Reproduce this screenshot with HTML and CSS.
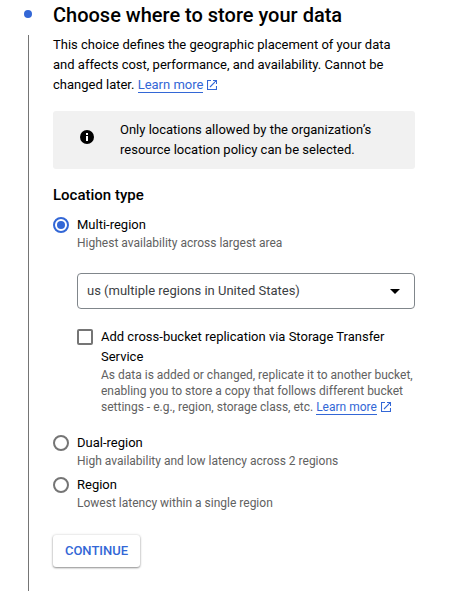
FILE: index.html
```
<!DOCTYPE html>
<html lang="en">
<head>
<meta charset="utf-8">
<title>Choose where to store your data</title>
<link rel="stylesheet" href="styles.css">
</head>
<body>
<main class="step">
  <div class="rail"><span class="dot"></span><span class="line"></span></div>
  <section class="content">
    <h2 class="title">Choose where to store your data</h2>
    <p class="intro">This choice defines the geographic placement of your data<br>and affects cost, performance, and availability. Cannot be<br>changed later. <a class="link">Learn more</a><svg class="ext" viewBox="0 0 10 10"><path d="M4 .5H.5v9h9V6M6 .5h3.5V4M9.3.7 3 7"/></svg></p>
    <div class="banner">
      <svg class="info" viewBox="0 0 14 14"><circle cx="7" cy="7" r="7"/><path d="M6 3h2v2H6zM6 6h2v5H6z"/></svg>
      <p class="banner-text">Only locations allowed by the organization’s<br>resource location policy can be selected.</p>
    </div>
    <h3 class="subtitle">Location type</h3>
    <div class="option">
      <span class="radio checked"></span>
      <div class="option-body">
        <div class="label">Multi-region</div>
        <div class="hint">Highest availability across largest area</div>
      </div>
    </div>
    <div class="nested">
      <div class="select"><span>us (multiple regions in United States)</span><svg class="arrow" viewBox="0 0 10 5"><path d="M0 0h10L5 5z"/></svg></div>
      <div class="check-row">
        <span class="checkbox"></span>
        <div class="check-body">
          <div class="label">Add cross-bucket replication via Storage Transfer<br>Service</div>
          <div class="hint">As data is added or changed, replicate it to another bucket,<br>enabling you to store a copy that follows different bucket<br>settings - e.g., region, storage class, etc. <a class="link">Learn more</a><svg class="ext" viewBox="0 0 10 10"><path d="M4 .5H.5v9h9V6M6 .5h3.5V4M9.3.7 3 7"/></svg></div>
        </div>
      </div>
    </div>
    <div class="option">
      <span class="radio"></span>
      <div class="option-body">
        <div class="label">Dual-region</div>
        <div class="hint">High availability and low latency across 2 regions</div>
      </div>
    </div>
    <div class="option">
      <span class="radio"></span>
      <div class="option-body">
        <div class="label">Region</div>
        <div class="hint">Lowest latency within a single region</div>
      </div>
    </div>
    <button class="continue">CONTINUE</button>
  </section>
</main>
</body>
</html>
```
FILE: styles.css
```
* { box-sizing: border-box; }
body {
  margin: 0;
  background: #fff;
  color: #000;
  font: 13px/20px Roboto, sans-serif;
}
h2, h3, p { margin: 0; }
.step { display: flex; height: 596px; overflow: hidden; }
.rail {
  width: 53px;
  padding: 10px 0 5px 24px;
  display: flex;
  flex-direction: column;
}
.dot { width: 8px; height: 8px; border-radius: 50%; background: #3367d6; }
.line { width: 1px; flex: 1; margin: 17px 0 0 4px; background: #757575; }
.content { width: 362px; white-space: nowrap; }
.title { font-size: 20px; line-height: 24px; font-weight: 500; padding-top: 3px; height: 35px; }
.link { color: #3367d6; border-bottom: 1px solid #3367d6; }
.ext {
  width: 10px;
  height: 10px;
  margin-left: 4px;
  vertical-align: -1px;
  fill: none;
  stroke: #3367d6;
  stroke-width: 1.1;
}
.banner {
  height: 58px;
  margin-top: 16px;
  padding: 0 27px;
  display: flex;
  align-items: center;
  gap: 26px;
  background: #f1f1f1;
  border-radius: 3px;
}
.info { width: 14px; height: 14px; margin-top: -6px; }
.info path { fill: #fff; }
.subtitle { margin-top: 16px; font-size: 15px; font-weight: 500; }
.option { display: flex; gap: 8px; height: 42px; }
.subtitle + .option { margin-top: 10px; }
.radio {
  width: 16px;
  height: 16px;
  margin-top: 2px;
  border: 2px solid #757575;
  border-radius: 50%;
  display: flex;
  align-items: center;
  justify-content: center;
}
.radio.checked { border-color: #3367d6; }
.radio.checked::before { content: ""; width: 8px; height: 8px; border-radius: 50%; background: #3367d6; }
.hint { font-size: 12px; line-height: 16px; color: #616161; }
.nested { margin: 16px 0 18px 24px; }
.select {
  height: 36px;
  padding: 0 14px 0 9px;
  border: 1px solid #80868b;
  border-radius: 4px;
  display: flex;
  align-items: center;
  justify-content: space-between;
  color: #3c4043;
}
.arrow { width: 10px; height: 5px; fill: #000; }
.check-row { display: flex; gap: 8px; margin-top: 18px; }
.checkbox { width: 16px; height: 16px; margin-top: 2px; border: 2px solid #757575; border-radius: 2px; }
.continue {
  display: block;
  width: 87px;
  height: 32px;
  margin-top: 18px;
  padding: 0;
  border: 0;
  border-radius: 3px;
  background: #fff;
  color: #3367d6;
  font: 500 13px/32px Roboto, sans-serif;
  box-shadow: 0 1px 2px rgba(0, 0, 0, .4), 0 0 3px rgba(0, 0, 0, .15);
}
```
